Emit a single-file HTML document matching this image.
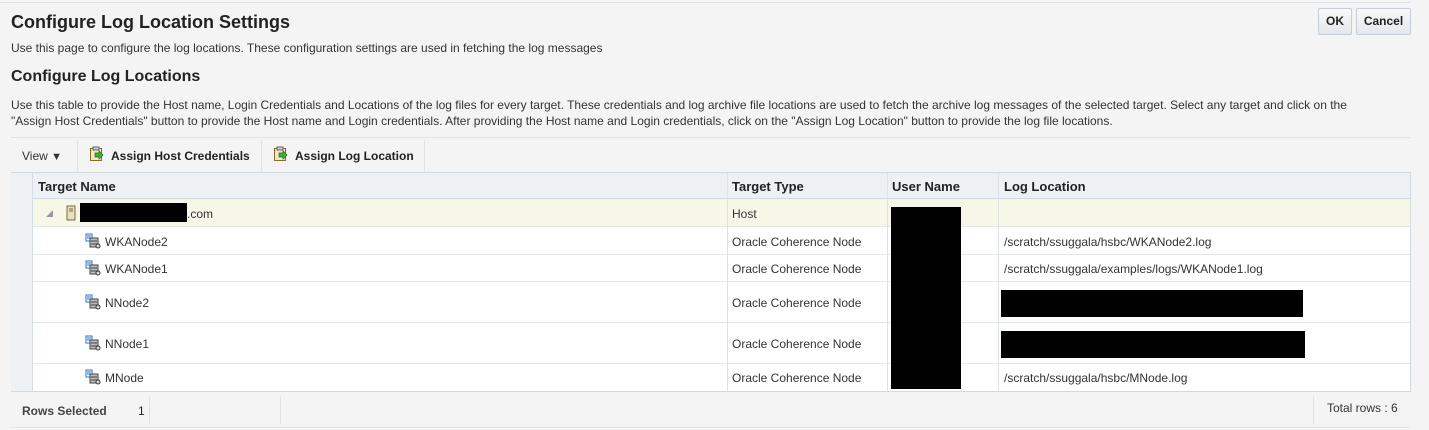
<!DOCTYPE html>
<html><head><meta charset="utf-8"><style>
*{margin:0;padding:0;box-sizing:border-box}
body{width:1429px;height:430px;background:#f4f4f4;font-family:"Liberation Sans",Arial,sans-serif;color:#333;position:relative;overflow:hidden;font-size:12px}
.a{position:absolute;white-space:nowrap}
.b{font-weight:bold;color:#222}
.btn{position:absolute;top:8px;height:27px;border:1px solid #c5ced8;background:linear-gradient(#f8f9fa,#e4e8ec);font-weight:bold;font-size:12px;color:#222;text-align:center;line-height:25px;border-radius:2px}
.row{position:absolute;left:11px;width:1399px;background:#fff;border-bottom:1px solid #e3e6ea}
.sel{position:absolute;left:11px;width:22px;background:#eef1f4;border-right:1px solid #d8dee5}
.cell{position:absolute;font-size:12px;color:#333}
.vl{position:absolute;width:1px;background:#e3e6ea}
.blk{position:absolute;background:#000}
.ic{position:absolute;width:16px;height:16px}
</style></head><body>
<div class="a" style="left:0;top:0;width:1410px;height:3px;border-bottom:1px solid #dfe3e8"></div>
<div class="a b" style="left:11px;top:12px;font-size:18px">Configure Log Location Settings</div>
<div class="a" style="left:11px;top:41px">Use this page to configure the log locations. These configuration settings are used in fetching the log messages</div>
<div class="btn" style="left:1318px;width:34px">OK</div>
<div class="btn" style="left:1356px;width:55px">Cancel</div>
<div class="a b" style="left:11px;top:68px;font-size:16px">Configure Log Locations</div>
<div class="a" style="left:11px;top:97px;line-height:16px">Use this table to provide the Host name, Login Credentials and Locations of the log files for every target. These credentials and log archive file locations are used to fetch the archive log messages of the selected target. Select any target and click on the<br>"Assign Host Credentials" button to provide the Host name and Login credentials. After providing the Host name and Login credentials, click on the "Assign Log Location" button to provide the log file locations.</div>
<div class="a" style="left:11px;top:137px;width:1399px;height:1px;background:#dfe3e8"></div>
<!-- toolbar -->
<div class="a" style="left:22px;top:149px;color:#333">View <span style="font-size:11px">&#9660;</span></div>
<div class="vl" style="left:77px;top:140px;height:32px;background:#dde2e8"></div>
<div class="vl" style="left:261px;top:140px;height:32px;background:#dde2e8"></div>
<div class="vl" style="left:424px;top:140px;height:32px;background:#dde2e8"></div>
<svg class="ic" style="left:89px;top:146px" viewBox="0 0 16 16"><rect x="1.5" y="2.5" width="11" height="12" fill="#f1e6c8" stroke="#8a6a2a"/><rect x="4" y="1" width="6" height="3" fill="#ccc" stroke="#666"/><path d="M6 7h4V5l4 4-4 4v-2H6z" fill="#3bb33b" stroke="#1c6e1c" stroke-width=".7"/></svg>
<div class="a b" style="left:111px;top:149px">Assign Host Credentials</div>
<svg class="ic" style="left:273px;top:146px" viewBox="0 0 16 16"><rect x="1.5" y="2.5" width="11" height="12" fill="#f1e6c8" stroke="#8a6a2a"/><rect x="4" y="1" width="6" height="3" fill="#ccc" stroke="#666"/><path d="M6 7h4V5l4 4-4 4v-2H6z" fill="#3bb33b" stroke="#1c6e1c" stroke-width=".7"/></svg>
<div class="a b" style="left:295px;top:149px">Assign Log Location</div>
<!-- table -->
<div class="a" style="left:11px;top:172px;width:1400px;height:220px;border:1px solid #d3d9e0;background:#fff"></div>
<div class="a" style="left:11px;top:173px;width:1399px;height:26px;background:#eef1f4;border-bottom:1px solid #d3d9e0"></div>
<div class="a b" style="left:38px;top:179px;font-size:13px">Target Name</div>
<div class="a b" style="left:732px;top:179px;font-size:13px">Target Type</div>
<div class="a b" style="left:892px;top:179px;font-size:13px">User Name</div>
<div class="a b" style="left:1004px;top:179px;font-size:13px">Log Location</div>
<div class="row" style="top:199px;height:28px;background:#f7f7e8"></div>
<div class="row" style="top:227px;height:28px"></div>
<div class="row" style="top:255px;height:27px"></div>
<div class="row" style="top:282px;height:41px"></div>
<div class="row" style="top:323px;height:41px"></div>
<div class="row" style="top:364px;height:27px;border-bottom:none"></div>
<div class="sel" style="top:173px;height:218px"></div>
<div class="vl" style="left:727px;top:173px;height:218px;background:#dde2e8"></div>
<div class="vl" style="left:887px;top:173px;height:218px;background:#dde2e8"></div>
<div class="vl" style="left:998px;top:173px;height:218px;background:#dde2e8"></div>
<div class="a" style="left:46px;top:210px;width:0;height:0;border-left:7px solid transparent;border-bottom:7px solid #999"></div>
<svg class="ic" style="left:63px;top:205px" viewBox="0 0 16 16"><rect x="4" y="1" width="8" height="14" fill="#e8dfc0" stroke="#7a6a40"/><path d="M6 4h4M6 6h4" stroke="#7a6a40"/></svg>
<div class="blk" style="left:80px;top:203px;width:107px;height:19px"></div>
<div class="cell" style="left:187px;top:207px">.com</div>
<div class="cell" style="left:732px;top:207px">Host</div>
<svg width="0" height="0" style="position:absolute"><defs><g id="n"><rect x="1" y="1" width="6" height="7" fill="#fff" stroke="#2a6fd0"/><path d="M2 3h4M2 5h4" stroke="#2a6fd0"/><rect x="5" y="5" width="8" height="9" fill="#bbb" stroke="#444"/><path d="M6 8h6M6 11h6" stroke="#444"/><circle cx="13" cy="13" r="2" fill="#ddd" stroke="#333"/></g></defs></svg>
<svg class="ic" style="left:85px;top:233px" viewBox="0 0 16 16"><use href="#n"/></svg>
<div class="cell" style="left:105px;top:235px">WKANode2</div>
<div class="cell" style="left:732px;top:235px">Oracle Coherence Node</div>
<div class="cell" style="left:1004px;top:235px">/scratch/ssuggala/hsbc/WKANode2.log</div>
<svg class="ic" style="left:85px;top:260px" viewBox="0 0 16 16"><use href="#n"/></svg>
<div class="cell" style="left:105px;top:262px">WKANode1</div>
<div class="cell" style="left:732px;top:262px">Oracle Coherence Node</div>
<div class="cell" style="left:1004px;top:262px">/scratch/ssuggala/examples/logs/WKANode1.log</div>
<svg class="ic" style="left:85px;top:294px" viewBox="0 0 16 16"><use href="#n"/></svg>
<div class="cell" style="left:105px;top:296px">NNode2</div>
<div class="cell" style="left:732px;top:296px">Oracle Coherence Node</div>
<svg class="ic" style="left:85px;top:335px" viewBox="0 0 16 16"><use href="#n"/></svg>
<div class="cell" style="left:105px;top:337px">NNode1</div>
<div class="cell" style="left:732px;top:337px">Oracle Coherence Node</div>
<svg class="ic" style="left:85px;top:369px" viewBox="0 0 16 16"><use href="#n"/></svg>
<div class="cell" style="left:105px;top:371px">MNode</div>
<div class="cell" style="left:732px;top:371px">Oracle Coherence Node</div>
<div class="cell" style="left:1004px;top:371px">/scratch/ssuggala/hsbc/MNode.log</div>
<div class="blk" style="left:891px;top:207px;width:70px;height:182px"></div>
<div class="blk" style="left:1001px;top:290px;width:302px;height:27px"></div>
<div class="blk" style="left:1001px;top:331px;width:304px;height:27px"></div>
<!-- footer -->
<div class="vl" style="left:149px;top:396px;height:28px;background:#dde2e8"></div>
<div class="vl" style="left:280px;top:396px;height:28px;background:#dde2e8"></div>
<div class="vl" style="left:1313px;top:396px;height:28px;background:#dde2e8"></div>
<div class="a b" style="left:22px;top:404px;color:#444">Rows Selected</div>
<div class="a" style="left:138px;top:404px;color:#222">1</div>
<div class="a" style="left:1327px;top:401px;color:#333">Total rows : 6</div>
<div class="a" style="left:11px;top:427px;width:1399px;height:1px;background:#dfe3e8"></div>
</body></html>
